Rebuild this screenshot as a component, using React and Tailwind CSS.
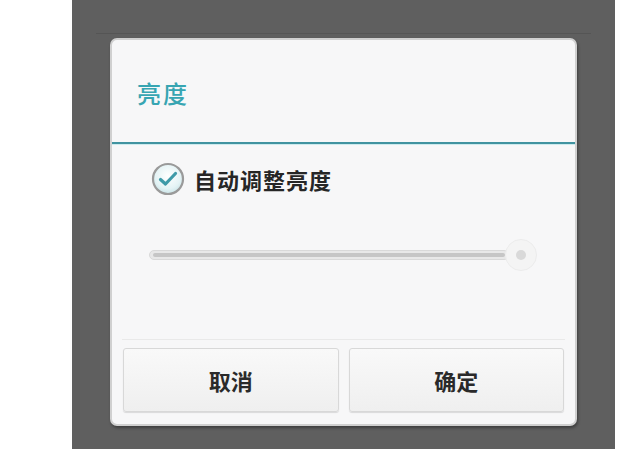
import React from "react";

const font = { fontFamily: '"Noto Sans CJK SC", "Noto Sans", sans-serif' };

const CheckCircle = () => (
  <svg width="34" height="34" viewBox="0 0 34 34">
    <defs>
      <radialGradient id="cbfill" cx="50%" cy="40%" r="60%">
        <stop offset="0%" stopColor="#ffffff" />
        <stop offset="70%" stopColor="#e4f3f5" />
        <stop offset="100%" stopColor="#c9e3e7" />
      </radialGradient>
    </defs>
    <circle cx="17" cy="17" r="15" fill="url(#cbfill)" stroke="#9a9a9a" strokeWidth="2.2" />
    <path d="M9.5 17.5 L14.5 22 L24.5 11.5" fill="none" stroke="#3e9aa8" strokeWidth="3.2" strokeLinecap="round" strokeLinejoin="round" />
  </svg>
);

const Slider = () => (
  <div className="flex items-center h-[34px] pl-[37px] pr-[38px]">
    <div className="flex-1 h-[10px] rounded-full bg-[#e8e8e8] border border-[#d9d9d9] flex items-center px-[3px]">
      <div className="w-full h-[4px] rounded-full bg-[#c6c6c6]" />
    </div>
    <div className="w-[32px] h-[32px] -ml-[4px] rounded-full border border-[#ececec] bg-[#f4f4f4] flex items-center justify-center">
      <div className="w-[10px] h-[10px] rounded-full bg-[#d9d9d9]" />
    </div>
  </div>
);

const DialogButton = ({ label }) => (
  <button className="flex-1 h-[64px] rounded-[3px] border border-[#d8d8d8] bg-gradient-to-b from-[#f9f9f9] to-[#efefef] shadow-[0_1px_1px_rgba(0,0,0,0.12)] text-[22px] font-bold text-[#2a2a2a] flex items-center justify-center">
    {label}
  </button>
);

export default function App() {
  return (
    <div className="w-[640px] h-[449px] bg-white flex overflow-hidden" style={font}>
      <div className="ml-[72px] w-[543px] h-full bg-[#5f5f5f] flex flex-col">
        <div className="h-[34px] mx-[24px] border-b border-[#555555]" />
        <div className="mt-[4px] mx-[38px] w-[467px] h-[388px] rounded-[7px] bg-[#f7f7f8] border-[2px] border-[#d0d0d0] shadow-[1px_2px_3px_rgba(0,0,0,0.35)] flex flex-col">
          <div className="h-[102px] pl-[25px] pt-[4px] flex items-center">
            <span className="text-[24px] font-medium text-[#37a5b2] tracking-[2px]">亮度</span>
          </div>
          <div className="h-[2px] bg-[#4193a0]" />
          <div className="h-[1px] bg-[#cdebee]" />
          <div className="mt-[17px] h-[34px] pl-[39px] flex items-center gap-[9px]">
            <CheckCircle />
            <span className="text-[22px] font-bold text-[#262626] tracking-[1px]">自动调整亮度</span>
          </div>
          <div className="mt-[42px]">
            <Slider />
          </div>
          <div className="flex-1" />
          <div className="h-[1px] mx-[10px] bg-[#e9e9e9] mb-[8px]" />
          <div className="flex gap-[10px] px-[11px] pb-[12px]">
            <DialogButton label="取消" />
            <DialogButton label="确定" />
          </div>
        </div>
      </div>
    </div>
  );
}
